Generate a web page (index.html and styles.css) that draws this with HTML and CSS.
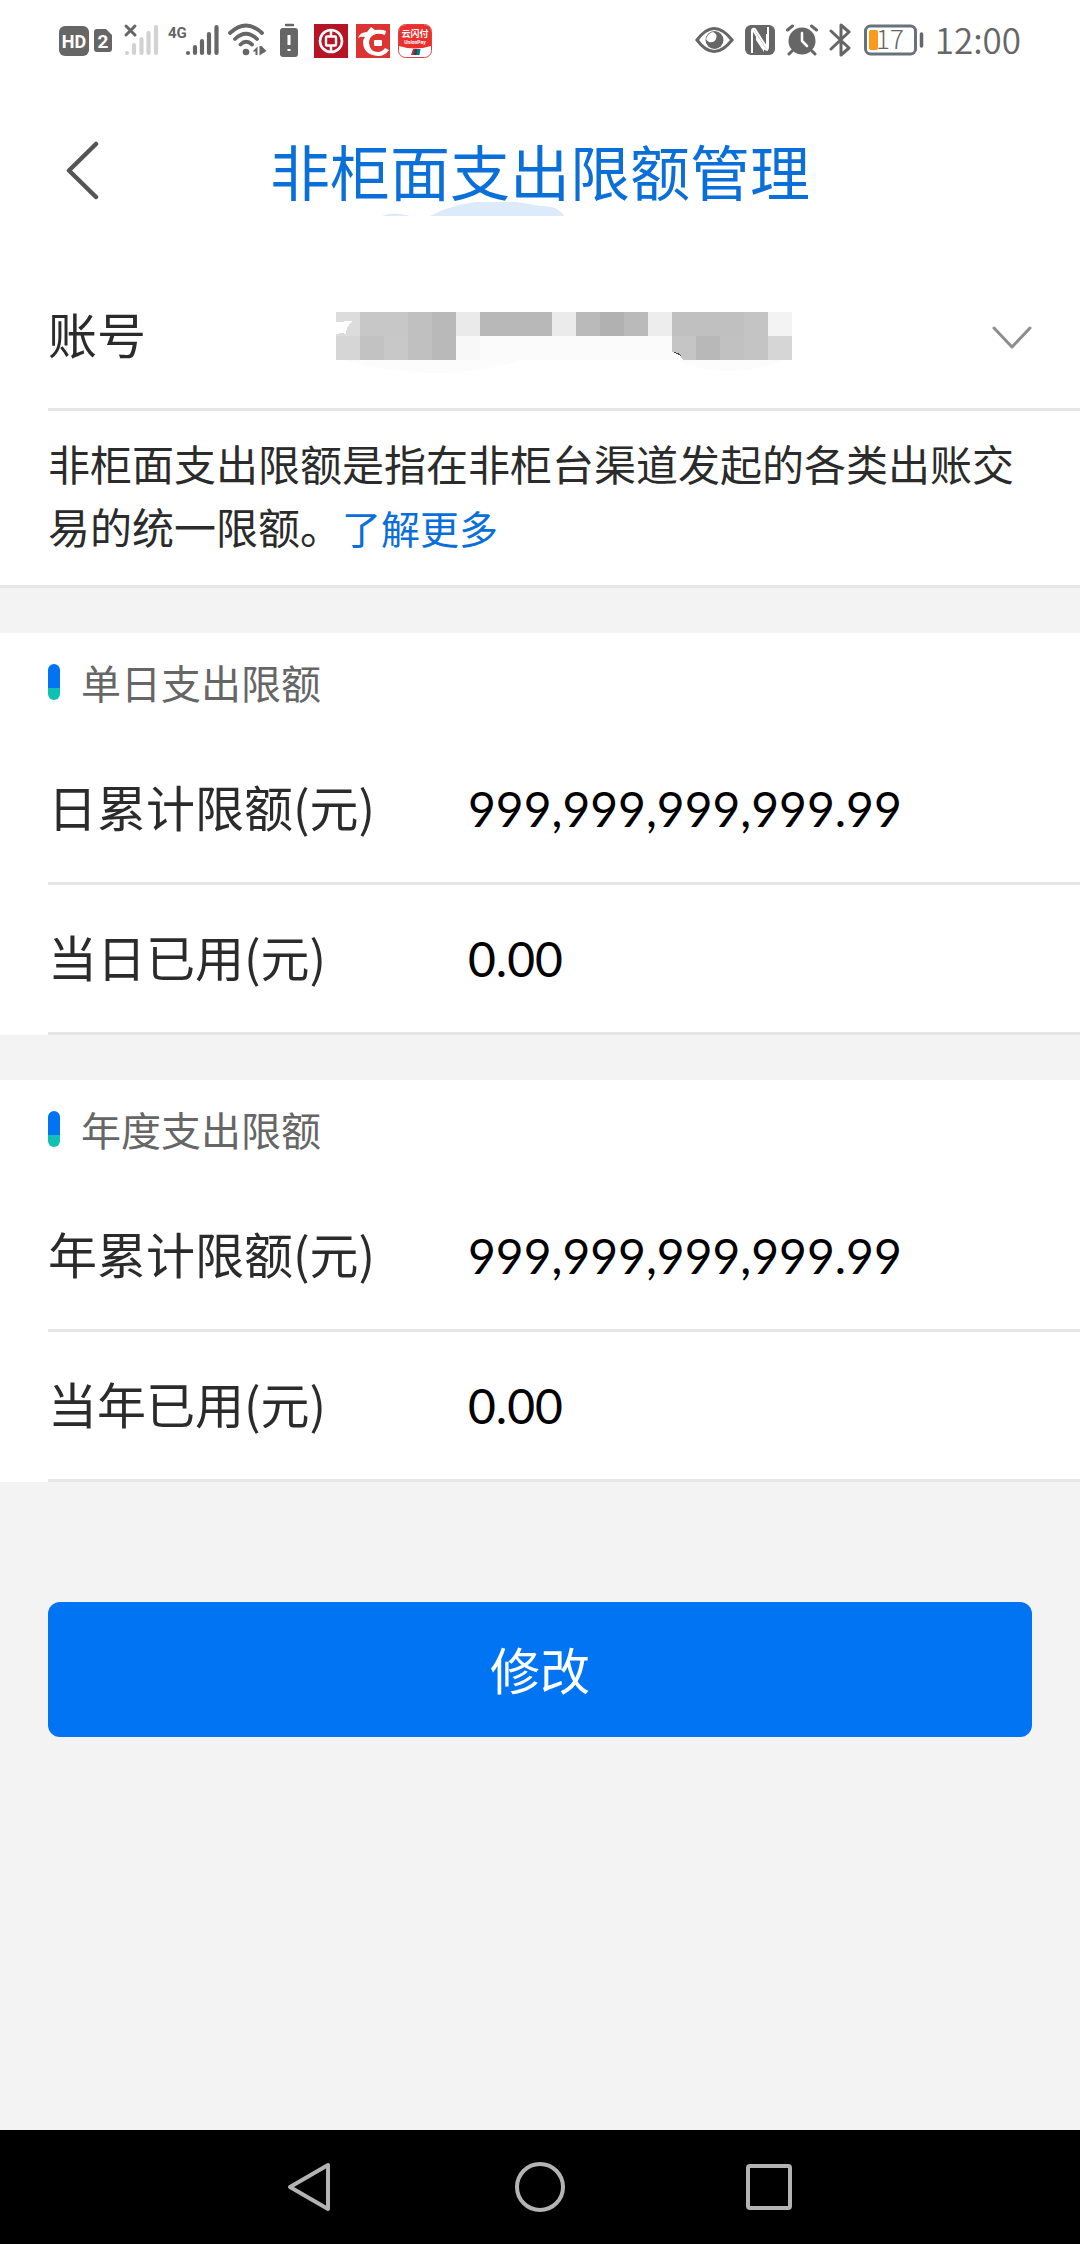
FILE: index.html
```html
<!DOCTYPE html>
<html lang="zh-CN">
<head>
<meta charset="utf-8">
<meta name="viewport" content="width=device-width, initial-scale=1">
<title>非柜面支出限额管理</title>
<link rel="stylesheet" href="styles.css">
</head>
<body>
<div class="status-bar">
  <div class="status-left">
    <svg width="53" height="48" viewBox="0 0 53 48">
      <rect x="0" y="10" width="30" height="30" rx="6" fill="#666"/>
      <text x="15" y="32" class="icon-text" font-size="18" text-anchor="middle" fill="#fff">HD</text>
      <path d="M38 13h9l6 6v14q0 3-3 3H38q-3 0-3-3V16q0-3 3-3z" fill="#666"/>
      <text x="44" y="32" class="icon-text" font-size="19" text-anchor="middle" fill="#fff">2</text>
    </svg>
    <svg width="40" height="48" viewBox="0 0 40 48" stroke-linecap="round" fill="none">
      <path d="M6 10l9 9M15 10l-9 9" stroke="#666" stroke-width="3"/>
      <path d="M7 37v0M14 29v8M21.500 23v14M28.500 17v20M36 11v26" stroke="#d2d2d2" stroke-width="4.200"/>
    </svg>
    <svg width="52" height="48" viewBox="0 0 52 48" stroke-linecap="round">
      <text x="0" y="22" class="icon-text" font-size="15" fill="#666">4G</text>
      <path d="M20 37v0M27 31v6M34 25v12M41 18v19M48.500 11v26" stroke="#666" stroke-width="4.200"/>
    </svg>
    <svg width="40" height="48" viewBox="0 0 40 48" fill="none" stroke="#666" stroke-width="3.800" stroke-linecap="round">
      <path d="M2 17Q18 2 34 17M7 23Q18 12.500 29 23M12.500 28.500Q18 23 24 28.500"/>
      <circle cx="18" cy="36" r="3.300" fill="#666" stroke="none"/>
      <path d="M24.500 35.500l5-5v8.500h-2v-3.500zM31.500 39.500v-9.500h2l5 5z" fill="#666" stroke="none"/>
    </svg>
    <svg width="30" height="48" viewBox="0 0 30 48">
      <path d="M10 9h7" stroke="#666" stroke-width="2.500" stroke-linecap="round"/>
      <rect x="4" y="12" width="18" height="29" rx="3" fill="#666"/>
      <path d="M13 19v10M13 33v2" stroke="#fff" stroke-width="3"/>
    </svg>
    <svg width="34" height="48" viewBox="0 0 34 48" fill="none" stroke="#fff">
      <path d="M0 8h34v34H0z" fill="#b71526" stroke="none"/>
      <circle cx="17" cy="25" r="11" stroke-width="2.600"/>
      <rect x="12" y="20.500" width="10" height="9" rx="1" stroke-width="2.400"/>
      <path d="M17 14v6M17 30v6" stroke-width="2.500"/>
    </svg>
    <svg width="34" height="48" viewBox="0 0 34 48">
      <path d="M0 8h34v34H0z" fill="#dc3432"/>
      <path d="M2 22q2-6 9-6l4-5 4 3q7-1 11 1l-1 4q-5-2-9-1-7 2-7 9 1 9 9 9 4 0 7-4l4 2q-4 6-11 6-14-1-15-13 0-4 2-6-4-1-7 1z" fill="#fff"/>
      <rect x="18" y="24" width="8" height="6" rx="1" fill="#fff"/>
    </svg>
    <svg width="34" height="48" viewBox="0 0 34 48">
      <rect x=".5" y="8.500" width="33" height="33" rx="7" fill="#fff" stroke="#dc4444"/>
      <path d="M1 30V15q0-6 7-6h18q7 0 7 6v15q-16 5-32 0z" fill="#ea302d"/>
      <text x="17" y="21" class="icon-text" font-size="9" text-anchor="middle" fill="#fff">云闪付</text>
      <text x="17" y="28" class="icon-text" font-size="5" text-anchor="middle" fill="#fff">UnionPay</text>
      <path d="M15 33h3l-1 6h-4z" fill="#b52c39"/><path d="M17 33h3l-1 6h-3z" fill="#174a70"/><path d="M19.500 33h3l-1 6h-3z" fill="#087b76"/>
    </svg>
  </div>
  <div class="status-right">
    <svg width="39" height="48" viewBox="0 0 39 48">
      <path d="M2 24Q19 1 37 24Q19 47 2 24z" fill="none" stroke="#666" stroke-width="3"/>
      <circle cx="19.500" cy="24" r="9" fill="#666"/>
      <path d="M18 16q5 2 3 7-2 4-7 3-2-1-3-3 2-6 7-7z" fill="#fff"/>
    </svg>
    <svg width="30" height="48" viewBox="0 0 30 48">
      <rect y="9" width="30" height="30" rx="6" fill="#666"/>
      <path d="M7 37V15q0-3 3-2l12 19V18M23 11v20q0 4-3 2L8 14" fill="none" stroke="#fff" stroke-width="2"/>
      <path d="M11 19l8 13v4l-8-12z" fill="#fff"/>
    </svg>
    <svg width="32" height="48" viewBox="0 0 32 48" fill="none" stroke="#666" stroke-width="3" stroke-linecap="round">
      <circle cx="16" cy="25" r="13.500" fill="#666" stroke="none"/>
      <path d="M1.500 14l5-4M30.500 14l-5-4M6 35l-3 3M26 35l3 3"/>
      <path d="M16 17v8l5 5" stroke="#fff" stroke-width="2.500"/>
    </svg>
    <svg width="24" height="48" viewBox="0 0 24 48" fill="none" stroke="#666" stroke-width="3" stroke-linejoin="round" stroke-linecap="round">
      <path d="M2 15l18 17-8 7V9l8 7L2 33"/>
    </svg>
    <svg width="60" height="48" viewBox="0 0 60 48">
      <rect x="1.500" y="10" width="50" height="28" rx="5" fill="none" stroke="#68727b" stroke-width="3"/>
      <rect x="5" y="14" width="9" height="20" rx="2" fill="#f99a1c"/>
      <text x="26" y="33" class="battery-text" text-anchor="middle" fill="#666">17</text>
      <path d="M57.500 18v12" stroke="#666" stroke-width="3.500" stroke-linecap="round"/>
    </svg>
    <time class="clock">12:00</time>
  </div>
</div>

<header class="title-bar">
  <button class="back" type="button" aria-label="返回">
    <svg width="40" height="60" viewBox="0 0 40 60"><path d="M34 4L7 30.500 34 57" fill="none" stroke="#555" stroke-width="4.500" stroke-linecap="round" stroke-linejoin="round"/></svg>
  </button>
  <svg class="title-shade" width="184" height="14" viewBox="0 0 184 14">
    <path d="M0 14Q11 9 28 14z" fill="#dceafa"/>
    <path d="M48 14Q94-10 158 4 176 3 182 14z" fill="#dceafa"/>
  </svg>
  <h1>非柜面支出限额管理</h1>
</header>

<main>
  <section class="panel">
    <div class="account">
      <label for="account">账号</label>
      <div class="account-field">
        <svg class="mask" width="456" height="64" viewBox="0 0 456 64" shape-rendering="crispEdges">
          <path d="M8 48h180q-90 26-180 0zM340 48h110q-60 22-110 0z" fill="#fcfcfc"/>
          <path d="M0 0h24v24H0z" fill="#dcdcdc"/><path d="M24 0h48v24H24z" fill="#c7c7c7"/><path d="M72 0h24v48H72z" fill="#c0c0c0"/><path d="M96 0h24v48H96z" fill="#b9b9b9"/>
          <path d="M120 0h24v24h-24z" fill="#eaeaea"/><path d="M144 0h72v24h-72z" fill="#b8b8b8"/><path d="M216 0h24v24h-24z" fill="#ebebeb"/>
          <path d="M240 0h72v24h-72z" fill="#bababa"/><path d="M264 0h24v24h-24z" fill="#b1b1b1"/><path d="M312 0h24v24h-24z" fill="#ededed"/>
          <path d="M336 0h72v24h-72z" fill="#c0c0c0"/><path d="M408 0h24v48h-24z" fill="#c4c4c4"/><path d="M432 0h24v24h-24z" fill="#f3f3f3"/>
          <path d="M0 24h24v24H0z" fill="#d6d6d6"/><path d="M24 24h24v24H24z" fill="#c2c2c2"/><path d="M48 24h24v24H48z" fill="#c8c8c8"/>
          <path d="M120 24h24v24h-24z" fill="#f8f8f8"/><path d="M144 24h192v24H144z" fill="#fbfbfb"/>
          <path d="M336 24h24v24h-24z" fill="#c5c5c5"/><path d="M360 24h24v24h-24z" fill="#b8b8b8"/><path d="M384 24h24v24h-24z" fill="#c1c1c1"/><path d="M432 24h24v24h-24z" fill="#d6d6d6"/>
          <path d="M0 10l16-1q-6 6-6 13l-4-1-6 1zM336 40l7 2 4 6h-11z" fill="#fff"/><path d="M337 40l6 1 2 3z" fill="#444"/>
        </svg>
        <select id="account"><option></option></select>
        <svg class="chevron" width="40" height="28" viewBox="0 0 40 28"><path d="M2 6l18 19L38 6" fill="none" stroke="#8d8d8d" stroke-width="3" stroke-linecap="round" stroke-linejoin="round"/></svg>
      </div>
    </div>
    <p class="notice">非柜面支出限额是指在非柜台渠道发起的各类出账交易的统一限额。<a href="#more">了解更多</a></p>
  </section>

  <section class="panel">
    <h2>单日支出限额</h2>
    <dl>
      <div class="row"><dt>日累计限额(元)</dt><dd>999,999,999,999.99</dd></div>
      <div class="row"><dt>当日已用(元)</dt><dd>0.00</dd></div>
    </dl>
  </section>

  <section class="panel">
    <h2>年度支出限额</h2>
    <dl>
      <div class="row"><dt>年累计限额(元)</dt><dd>999,999,999,999.99</dd></div>
      <div class="row"><dt>当年已用(元)</dt><dd>0.00</dd></div>
    </dl>
  </section>

  <div class="actions"><button class="primary" type="button">修改</button></div>
</main>

<nav class="system-nav" aria-label="系统导航">
  <button type="button" aria-label="返回"><svg width="52" height="52" viewBox="0 0 52 52"><path d="M43 4v44L5 26z"/></svg></button>
  <button type="button" aria-label="主屏幕"><svg width="52" height="52" viewBox="0 0 52 52"><circle cx="26" cy="26" r="23"/></svg></button>
  <button type="button" aria-label="最近任务"><svg width="52" height="52" viewBox="0 0 52 52"><rect x="5" y="5" width="42" height="42" rx="2"/></svg></button>
</nav>
</body>
</html>
```
FILE: styles.css
```css
* {
  box-sizing: border-box;
}

body {
  margin: 0;
  min-height: 100vh;
  display: flex;
  flex-direction: column;
  background: #f3f3f3;
  color: #2b2b2b;
  font-family: "Noto Sans CJK SC", sans-serif;
}

svg {
  display: block;
  flex: none;
}

button {
  padding: 0;
  border: 0;
  background: none;
  font-family: inherit;
  cursor: pointer;
}

.status-bar {
  display: flex;
  justify-content: space-between;
  align-items: center;
  height: 80px;
  padding: 0 59px;
  background: #fff;
}

.status-left,
.status-right {
  display: flex;
  align-items: center;
  gap: 8px;
}

.status-right {
  gap: 11px;
}

.icon-text {
  font-family: "Roboto", "Noto Sans CJK SC", sans-serif;
  font-weight: 700;
}

.battery-text {
  font-size: 26px;
  font-weight: 300;
}

.clock {
  padding-bottom: 2px;
  font-size: 35px;
  font-weight: 350;
  line-height: 48px;
  color: #666;
}

.title-bar {
  position: relative;
  display: grid;
  grid-template-columns: 120px 1fr 120px;
  align-items: center;
  height: 184px;
  padding-bottom: 4px;
  background: #fff;
}

.back {
  width: 40px;
  margin-left: 62px;
}

.title-shade {
  position: absolute;
  left: calc(50% - 158px);
  bottom: 48px;
}

h1 {
  position: relative;
  grid-column: 2;
  margin: 0;
  font-size: 60px;
  font-weight: 400;
  line-height: 84px;
  text-align: center;
  color: #0a6fd8;
}

main {
  flex: 1;
}

.panel {
  margin-bottom: 45px;
  background: #fff;
}

.account,
.row {
  display: grid;
  align-items: center;
  margin-left: 48px;
  border-bottom: 3px solid #e6e6e6;
  font-size: 49px;
  line-height: 72px;
}

.account {
  grid-template-columns: 288px 1fr;
  height: 147px;
}

.account label,
dt {
  padding-bottom: 6px;
}

.account-field {
  display: grid;
  align-items: center;
  height: 72px;
  padding-right: 48px;
}

.account-field > * {
  grid-area: 1 / 1;
}

.mask {
  align-self: end;
  margin-bottom: -4px;
}

.chevron {
  justify-self: end;
  pointer-events: none;
}

select {
  width: 100%;
  height: 72px;
  border: 0;
  background: transparent;
  appearance: none;
  font: inherit;
}

.notice {
  margin: 0;
  padding: 20px 48px 28px;
  border-bottom: 3px solid #e6e6e6;
  font-size: 42px;
  line-height: 63px;
}

.notice a {
  font-size: 39px;
  line-height: 1;
  color: #0a6fd8;
  text-decoration: none;
}

h2 {
  display: flex;
  align-items: center;
  gap: 21px;
  height: 102px;
  margin: 0;
  padding: 0 48px 4px;
  font-size: 40px;
  font-weight: 400;
  color: #666;
}

h2::before {
  content: "";
  width: 12px;
  height: 36px;
  border-radius: 6px;
  background: linear-gradient(#0074f3 68%, #0fc1b5 68%);
}

dl,
dd {
  margin: 0;
}

.row {
  grid-template-columns: 420px 1fr;
  height: 150px;
}

dd {
  font-family: "Lato", sans-serif;
  font-size: 48px;
  color: #000;
}

.actions {
  padding: 75px 48px;
}

.primary {
  width: 100%;
  height: 135px;
  padding-bottom: 4px;
  border-radius: 12px;
  background: #0074f3;
  color: #fff;
  font-size: 50px;
}

.system-nav {
  display: flex;
  justify-content: center;
  gap: 177px;
  height: 114px;
  background: #000;
}

.system-nav svg {
  fill: none;
  stroke: #b3b3b3;
  stroke-width: 4px;
  stroke-linejoin: round;
}
```
